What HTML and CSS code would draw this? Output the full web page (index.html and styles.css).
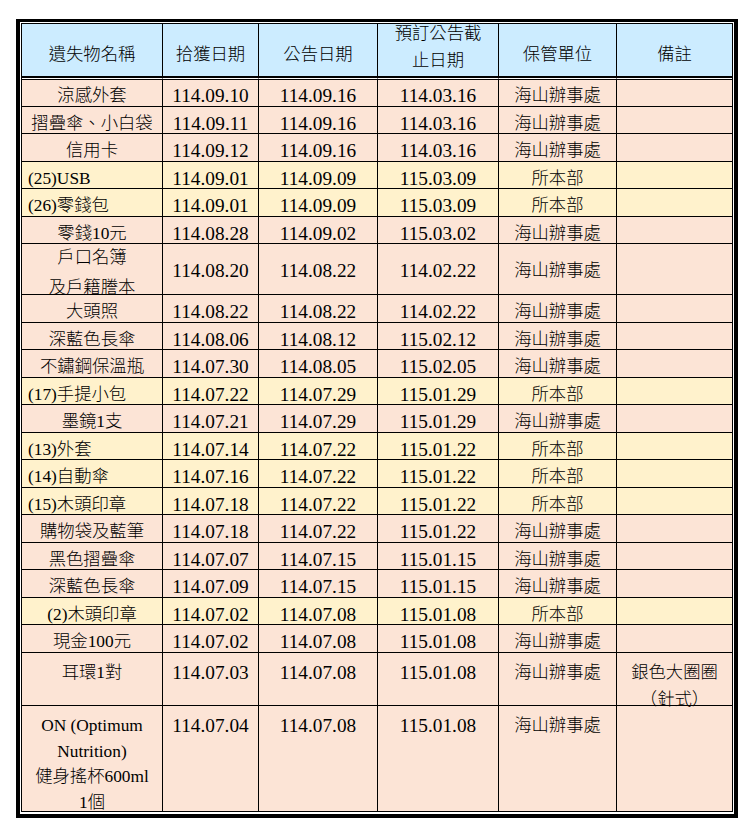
FILE: index.html
```html
<!DOCTYPE html>
<html lang="zh-Hant">
<head>
<meta charset="utf-8">
<title>遺失物招領</title>
<link rel="stylesheet" href="styles.css">
</head>
<body>
<div class="frame">
<table class="lost">
<colgroup>
<col class="c1"><col class="c2"><col class="c3"><col class="c4"><col class="c5"><col class="c6">
</colgroup>
<thead>
<tr>
<th>遺失物名稱</th>
<th>拾獲日期</th>
<th>公告日期</th>
<th class="two"><div class="lines">預訂公告截<br>止日期</div></th>
<th>保管單位</th>
<th>備註</th>
</tr>
</thead>
<tbody>
<tr class="p"><td>涼感外套</td><td>114.09.10</td><td>114.09.16</td><td>114.03.16</td><td>海山辦事處</td><td></td></tr>
<tr class="p"><td>摺疊傘、小白袋</td><td>114.09.11</td><td>114.09.16</td><td>114.03.16</td><td>海山辦事處</td><td></td></tr>
<tr class="p"><td>信用卡</td><td>114.09.12</td><td>114.09.16</td><td>114.03.16</td><td>海山辦事處</td><td></td></tr>
<tr class="y"><td class="left">(25)USB</td><td>114.09.01</td><td>114.09.09</td><td>115.03.09</td><td>所本部</td><td></td></tr>
<tr class="y"><td class="left">(26)零錢包</td><td>114.09.01</td><td>114.09.09</td><td>115.03.09</td><td>所本部</td><td></td></tr>
<tr class="p"><td>零錢10元</td><td>114.08.28</td><td>114.09.02</td><td>115.03.02</td><td>海山辦事處</td><td></td></tr>
<tr class="p double"><td><div class="pair">戶口名簿<br>及戶籍謄本</div></td><td>114.08.20</td><td>114.08.22</td><td>114.02.22</td><td>海山辦事處</td><td></td></tr>
<tr class="p"><td>大頭照</td><td>114.08.22</td><td>114.08.22</td><td>114.02.22</td><td>海山辦事處</td><td></td></tr>
<tr class="p"><td>深藍色長傘</td><td>114.08.06</td><td>114.08.12</td><td>115.02.12</td><td>海山辦事處</td><td></td></tr>
<tr class="p"><td>不鏽鋼保溫瓶</td><td>114.07.30</td><td>114.08.05</td><td>115.02.05</td><td>海山辦事處</td><td></td></tr>
<tr class="y"><td class="left">(17)手提小包</td><td>114.07.22</td><td>114.07.29</td><td>115.01.29</td><td>所本部</td><td></td></tr>
<tr class="p"><td>墨鏡1支</td><td>114.07.21</td><td>114.07.29</td><td>115.01.29</td><td>海山辦事處</td><td></td></tr>
<tr class="y"><td class="left">(13)外套</td><td>114.07.14</td><td>114.07.22</td><td>115.01.22</td><td>所本部</td><td></td></tr>
<tr class="y"><td class="left">(14)自動傘</td><td>114.07.16</td><td>114.07.22</td><td>115.01.22</td><td>所本部</td><td></td></tr>
<tr class="y"><td class="left">(15)木頭印章</td><td>114.07.18</td><td>114.07.22</td><td>115.01.22</td><td>所本部</td><td></td></tr>
<tr class="p"><td>購物袋及藍筆</td><td>114.07.18</td><td>114.07.22</td><td>115.01.22</td><td>海山辦事處</td><td></td></tr>
<tr class="p"><td>黑色摺疊傘</td><td>114.07.07</td><td>114.07.15</td><td>115.01.15</td><td>海山辦事處</td><td></td></tr>
<tr class="p"><td>深藍色長傘</td><td>114.07.09</td><td>114.07.15</td><td>115.01.15</td><td>海山辦事處</td><td></td></tr>
<tr class="y"><td>(2)木頭印章</td><td>114.07.02</td><td>114.07.08</td><td>115.01.08</td><td>所本部</td><td></td></tr>
<tr class="p"><td>現金100元</td><td>114.07.02</td><td>114.07.08</td><td>115.01.08</td><td>海山辦事處</td><td></td></tr>
<tr class="p top"><td>耳環1對</td><td>114.07.03</td><td>114.07.08</td><td>115.01.08</td><td>海山辦事處</td><td><div class="note">銀色大圈圈<br>（針式）</div></td></tr>
<tr class="p tall"><td><div class="quad">ON (Optimum<br>Nutrition)<br>健身搖杯600ml<br>1個</div></td><td>114.07.04</td><td>114.07.08</td><td>115.01.08</td><td>海山辦事處</td><td></td></tr>
</tbody>
</table>
</div>
</body>
</html>
```
FILE: styles.css
```css
html, body {
  margin: 0;
  padding: 0;
  background: #ffffff;
}

.frame {
  margin: 19px 0 0 16px;
  width: max-content;
  border: 4px solid #000;
  border-top-width: 3px;
  padding: 1px 1px 2px 1px;
  background: #ffffff;
}

.lost {
  border-collapse: separate;
  border-spacing: 0;
  table-layout: fixed;
  width: 712px;
  border: 1px solid #000;
  font-family: "Liberation Serif", "Noto Sans CJK TC", serif;
  font-size: 17.33px;
  font-weight: 300;
  color: #000;
}

.c1 { width: 141px; }
.c2 { width: 96px; }
.c3 { width: 119px; }
.c4 { width: 121px; }
.c5 { width: 118px; }
.c6 { width: 115px; }

.lost th,
.lost td {
  padding: 0;
  border-right: 1px solid #000;
  border-bottom: 1px solid #000;
  text-align: center;
  font-weight: 300;
  white-space: nowrap;
}

.lost th:last-child,
.lost td:last-child {
  border-right: 0;
}

.lost tbody tr:last-child td {
  border-bottom: 0;
}

.lost thead th {
  background: #ccecff;
  height: 54px;
  border-bottom: 2px solid #000;
  vertical-align: middle;
  padding-top: 10px;
  box-sizing: border-box;
  line-height: 26px;
}

.lost thead th.two {
  padding-top: 0;
  vertical-align: top;
}

.lost thead th.two .lines {
  margin-top: -3px;
  line-height: 26.7px;
}

.lost tbody tr:first-child td {
  border-top: 1px solid #fff;
  box-shadow: inset 0 1px 0 #000;
}

.lost tbody td {
  line-height: 18.5px;
  padding-top: 8px;
  vertical-align: middle;
}

.lost tbody td:nth-child(2),
.lost tbody td:nth-child(3),
.lost tbody td:nth-child(4) {
  font-size: 19.3px;
}

.p td { background: #fce4d6; }
.y td { background: #fff2cc; }

.lost tbody td.left {
  text-align: left;
  padding-left: 6px;
}

.lost tbody .double td {
  padding-top: 4px;
  line-height: 22.5px;
}

.pair {
  line-height: 30px;
  margin: -5.5px 0 -8.2px;
}

.lost tbody .top td {
  vertical-align: top;
  line-height: 27px;
  padding-top: 6px;
}

.note {
  margin-bottom: -8.3px;
}

.lost tbody .tall td {
  vertical-align: top;
  line-height: 25.5px;
  padding-top: 7.5px;
}

.quad {
  margin-bottom: -4px;
}
```
